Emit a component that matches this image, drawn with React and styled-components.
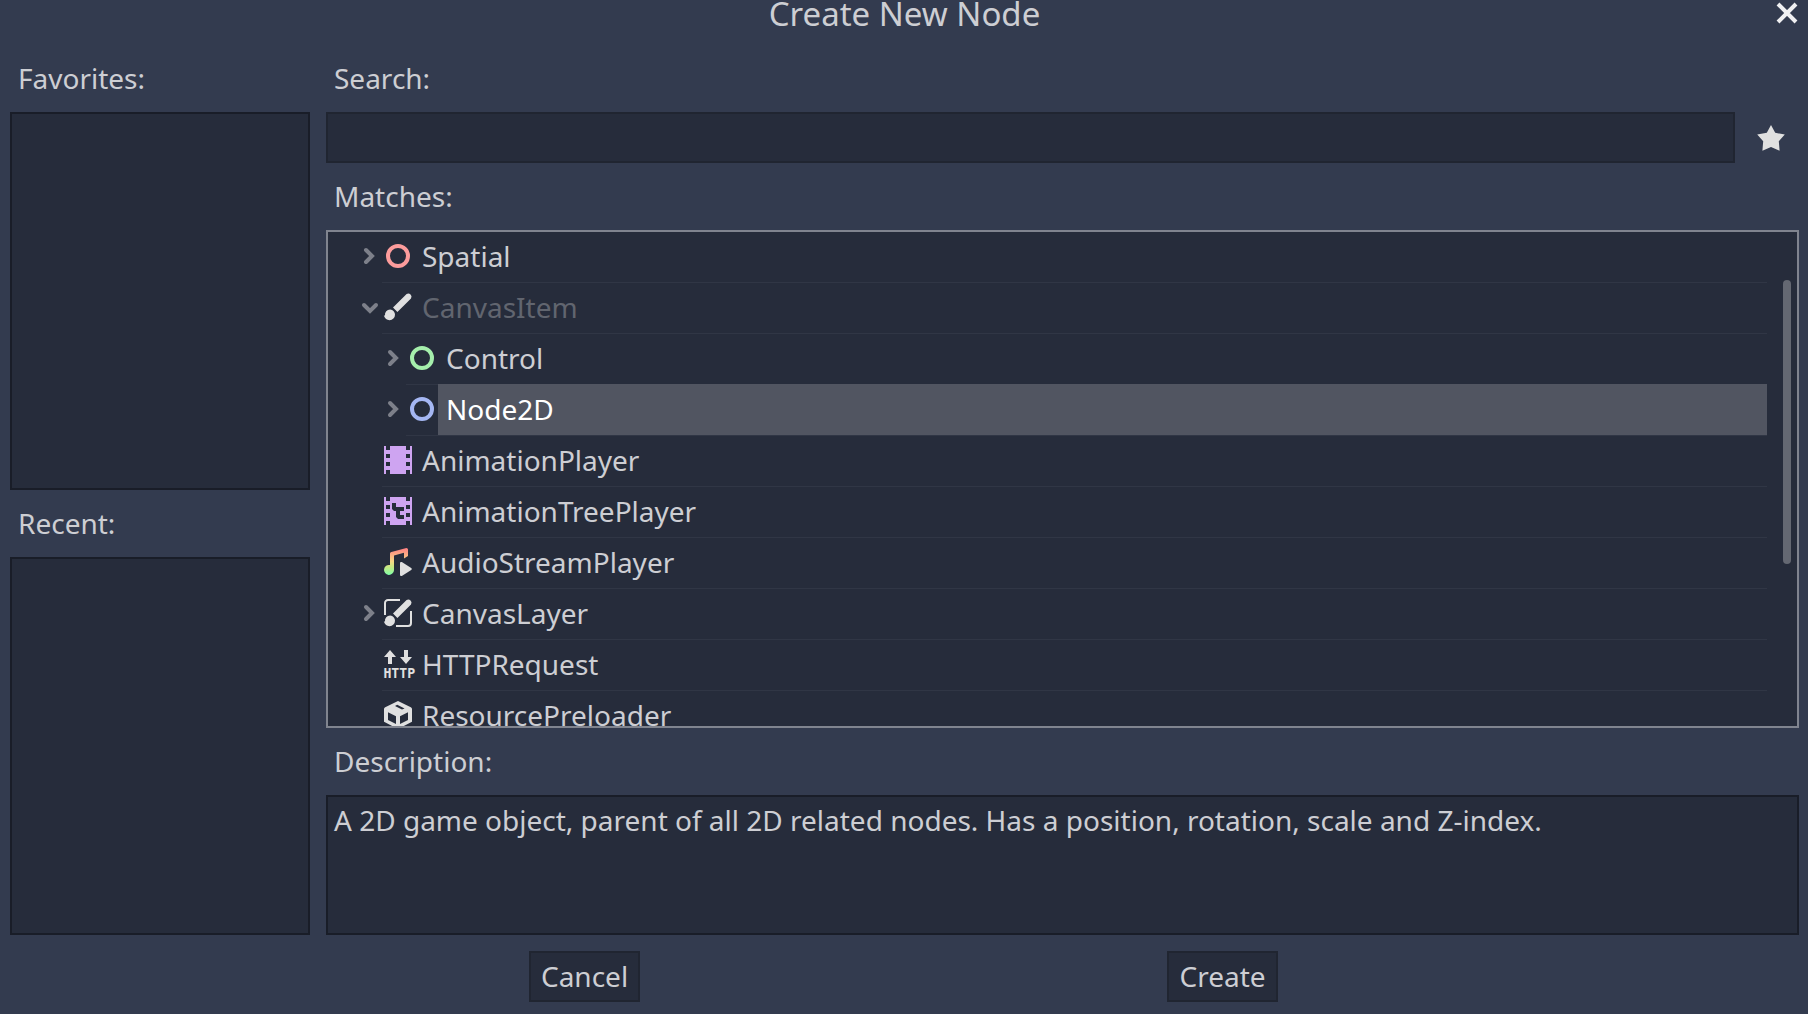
import React, { useState } from 'react';
import styled, { createGlobalStyle } from 'styled-components';

const color = {
  base: '#333b4f',
  panel: '#262c3b',
  panelEdge: '#191d28',
  controlEdge: '#202531',
  focusEdge: '#80848f',
  text: '#cdced3',
  disabled: '#61656f',
  selected: '#515561',
  line: '#303645',
  thumb: '#646872',
  arrow: '#7d808a',
  icon: '#e0e0e0',
};

const GlobalStyle = createGlobalStyle`
  *, *::before, *::after { box-sizing: border-box; }
  body {
    margin: 0;
    background: ${color.base};
    color: ${color.text};
    font: 28px/38px "Noto Sans", sans-serif;
  }
  button, input { font: inherit; color: inherit; }
`;

const Dialog = styled.div`
  display: flex;
  flex-direction: column;
  height: 100vh;
  padding: 0 9px 12px 10px;
`;

const TitleBar = styled.header`
  display: grid;
  grid-template-columns: 24px 1fr 24px;
  flex: none;
  height: 45px;
`;

const Title = styled.h1`
  grid-column: 2;
  margin: 0;
  font-size: 33px;
  font-weight: 400;
  line-height: 28px;
  text-align: center;
`;

const IconButton = styled.button`
  display: flex;
  align-items: center;
  justify-content: center;
  flex: none;
  width: ${(p) => p.$width}px;
  height: ${(p) => p.$height}px;
  padding: ${(p) => p.$top || 0}px 0 0;
  border: 0;
  background: none;
  cursor: pointer;
`;

const Body = styled.main`
  display: flex;
  flex: 1;
  gap: 16px;
  min-height: 0;
`;

const Sidebar = styled.aside`
  display: flex;
  flex-direction: column;
  flex: none;
  width: 300px;
`;

const Content = styled.div`
  display: flex;
  flex-direction: column;
  flex: 1;
  min-width: 0;
`;

const Caption = styled.label`
  flex: none;
  padding-left: 8px;
  line-height: 67px;
`;

const Panel = styled.div`
  flex: ${(p) => (p.$height ? 'none' : '1')};
  height: ${(p) => (p.$height ? `${p.$height}px` : 'auto')};
  padding: 4px 6px;
  border: 2px solid ${color.panelEdge};
  background: ${color.panel};
`;

const SearchRow = styled.div`
  display: flex;
  gap: 8px;
`;

const SearchInput = styled.input`
  flex: 1;
  min-width: 0;
  height: 51px;
  padding: 0 8px;
  border: 2px solid ${color.controlEdge};
  border-radius: 0;
  outline: none;
  background: ${color.panel};
`;

const TreeFrame = styled.div`
  display: flex;
  flex: 1;
  min-height: 0;
  overflow: hidden;
  border: 2px solid ${color.focusEdge};
  background: ${color.panel};
`;

const Tree = styled.ul`
  flex: 1;
  min-width: 0;
  margin: -1px 0 0;
  padding: 0;
  list-style: none;
`;

const Row = styled.li`
  display: flex;
  align-items: flex-start;
  height: 51px;
  padding-left: ${(p) => 30 + p.$depth * 24}px;
`;

const Toggle = styled.button`
  flex: none;
  width: 24px;
  height: 24px;
  margin: 13px 0;
  padding: 0;
  border: 0;
  background: none;
  visibility: ${(p) => (p.$shown ? 'visible' : 'hidden')};
  svg { display: block; }
`;

const Cell = styled.div`
  display: flex;
  flex: 1;
  min-width: 0;
  box-shadow: 0 1px 0 ${color.line};
`;

const IconSlot = styled.span`
  flex: none;
  width: 32px;
  height: 32px;
  margin-top: 9px;
  svg { display: block; overflow: visible; }
`;

const Name = styled.span`
  flex: 1;
  padding-left: 8px;
  line-height: 51px;
  white-space: nowrap;
  cursor: default;
  color: ${(p) => (p.$selected ? '#ffffff' : p.$disabled ? color.disabled : color.text)};
  background: ${(p) => (p.$selected ? color.selected : 'transparent')};
`;

const ScrollTrack = styled.div`
  flex: none;
  width: 8px;
  margin: 48px 6px 0 16px;
`;

const ScrollThumb = styled.div`
  height: 284px;
  border-radius: 4px;
  background: ${color.thumb};
`;

const Description = styled.p`
  margin: 0;
`;

const Footer = styled.footer`
  display: flex;
  flex: none;
  justify-content: space-evenly;
  padding: 16px 2px 0 0;
`;

const DialogButton = styled.button`
  min-width: 111px;
  height: 51px;
  margin: 0 8px;
  padding: 0 10px 2px;
  border: 2px solid ${color.controlEdge};
  background: ${color.panel};
  cursor: pointer;
`;

const Icon = ({ children }) => (
  <svg width="32" height="32" viewBox="0 0 16 16" fill={color.icon} aria-hidden="true">
    {children}
  </svg>
);

const Ring = ({ stroke }) => (
  <Icon>
    <circle cx="8" cy="8" r="5" fill="none" stroke={stroke} strokeWidth="2" />
  </Icon>
);

const BrushShape = () => (
  <>
    <path d="M5.5 8.3 12.3 1.5A1.6 1.6 0 0 1 14.5 3.7L7.7 10.5Z" />
    <path d="M4.1 9.2A2.6 2.6 0 0 1 6.5 11.9A2.7 2.7 0 0 1 3.8 14.6C2.3 14.6 1.5 13.9 0.9 12.3L1.5 12.2A2.6 2.6 0 0 1 4.1 9.2Z" />
  </>
);

const BrushIcon = () => (
  <Icon>
    <BrushShape />
  </Icon>
);

const LayerIcon = () => (
  <Icon>
    <path
      d="M1.5 9V3A1.5 1.5 0 0 1 3 1.5H9M14.5 7V13A1.5 1.5 0 0 1 13 14.5H7"
      fill="none"
      stroke={color.icon}
    />
    <BrushShape />
  </Icon>
);

const FilmIcon = ({ tree }) => (
  <Icon>
    <path
      fill="#cea4f1"
      fillRule="evenodd"
      d="M1 1H2V3H4V1H12V3H14V1H15V15H14V13H12V15H4V13H2V15H1ZM2 5V7H4V5ZM2 9V11H4V9ZM12 5V7H14V5ZM12 9V11H14V9Z"
    />
    {tree && <path fill={color.panel} d="M5 4H7V6H11V8H9V10H11V12H8L7 11V8H6L5 7Z" />}
  </Icon>
);

const AudioIcon = () => (
  <Icon>
    <defs>
      <linearGradient id="note" x1="0" y1="1" x2="0" y2="14.5" gradientUnits="userSpaceOnUse">
        <stop offset="0" stopColor="#ff7f83" />
        <stop offset="0.5" stopColor="#f7d984" />
        <stop offset="0.72" stopColor="#c4ea84" />
        <stop offset="1" stopColor="#7dffa8" />
      </linearGradient>
    </defs>
    <path
      fill="url(#note)"
      d="M12.2 1A.8.8 0 0 1 13 1.8V5L11 6.3V3.4L6 4.8V12A2.5 2.5 0 1 1 4 9.5V3.9A.9.9 0 0 1 4.7 3Z"
    />
    <path d="M9 8.6C9 8 9.6 7.8 10.1 8.1L14.6 11A.6.6 0 0 1 14.6 12L10.1 14.9C9.6 15.2 9 15 9 14.4Z" />
  </Icon>
);

const HttpIcon = () => (
  <Icon>
    <path d="M4 1 7 4.5H5V8H3V4.5H1ZM11 1H13V4.5H15L12 8 9 4.5H11Z" />
    <text x="0.7" y="15" fontFamily="DejaVu Sans Mono, monospace" fontWeight="700" fontSize="6.6">
      HTTP
    </text>
  </Icon>
);

const PackageIcon = () => (
  <Icon>
    <path
      fillRule="evenodd"
      d="M8 1 14.4 4.1Q15 4.4 15 5V11.4L8 15 1 11.4V5Q1 4.4 1.6 4.1ZM3 6.6V10.5L7 12.5V8.6ZM13 6.6 9 8.6V12.5L13 10.5ZM7.6 2.9 6.5 3.5 10 5.3 11.3 4.7Z"
    />
  </Icon>
);

const StarIcon = () => (
  <Icon>
    <path d="M8 1 10.1 4.9 14.9 5.8 11.9 9.1 12.3 13.9 8 12 3.7 13.9 4.1 9.1 1.1 5.8 5.9 4.9Z" />
  </Icon>
);

const CloseIcon = () => (
  <svg width="24" height="24" viewBox="0 0 24 24" aria-hidden="true">
    <path d="M3 3 21 21M21 3 3 21" fill="none" stroke="#f0f0f2" strokeWidth="4" />
  </svg>
);

const Chevron = ({ open }) => (
  <svg width="24" height="24" viewBox="0 0 24 24" aria-hidden="true">
    <path
      d={open ? 'M6 10 12 16 18 10' : 'M8 6 14 12 8 18'}
      fill="none"
      stroke={color.arrow}
      strokeWidth="4"
      strokeLinecap="round"
    />
  </svg>
);

const nodes = [
  { name: 'Spatial', depth: 0, arrow: 'closed', icon: <Ring stroke="#fc9c9c" /> },
  { name: 'CanvasItem', depth: 0, arrow: 'open', disabled: true, icon: <BrushIcon /> },
  { name: 'Control', depth: 1, arrow: 'closed', icon: <Ring stroke="#a5efac" /> },
  { name: 'Node2D', depth: 1, arrow: 'closed', icon: <Ring stroke="#a5b7f3" /> },
  { name: 'AnimationPlayer', depth: 0, icon: <FilmIcon /> },
  { name: 'AnimationTreePlayer', depth: 0, icon: <FilmIcon tree /> },
  { name: 'AudioStreamPlayer', depth: 0, icon: <AudioIcon /> },
  { name: 'CanvasLayer', depth: 0, arrow: 'closed', icon: <LayerIcon /> },
  { name: 'HTTPRequest', depth: 0, icon: <HttpIcon /> },
  { name: 'ResourcePreloader', depth: 0, icon: <PackageIcon /> },
];

export default function App() {
  const [selected, setSelected] = useState('Node2D');

  return (
    <>
      <GlobalStyle />
      <Dialog role="dialog" aria-labelledby="dialog-title">
        <TitleBar>
          <Title id="dialog-title">Create New Node</Title>
          <IconButton type="button" aria-label="Close" $width={24} $height={26}>
            <CloseIcon />
          </IconButton>
        </TitleBar>
        <Body>
          <Sidebar>
            <Caption as="div" id="favorites">Favorites:</Caption>
            <Panel role="listbox" aria-labelledby="favorites" />
            <Caption as="div" id="recent">Recent:</Caption>
            <Panel role="listbox" aria-labelledby="recent" />
          </Sidebar>
          <Content>
            <Caption htmlFor="search">Search:</Caption>
            <SearchRow>
              <SearchInput id="search" type="text" />
              <IconButton type="button" aria-label="Favorite" $width={56} $height={51} $top={3}>
                <StarIcon />
              </IconButton>
            </SearchRow>
            <Caption as="div" id="matches">Matches:</Caption>
            <TreeFrame>
              <Tree role="tree" aria-labelledby="matches">
                {nodes.map((node) => (
                  <Row
                    key={node.name}
                    role="treeitem"
                    aria-selected={selected === node.name}
                    $depth={node.depth}
                  >
                    <Toggle type="button" aria-label={`Toggle ${node.name}`} $shown={!!node.arrow}>
                      <Chevron open={node.arrow === 'open'} />
                    </Toggle>
                    <Cell>
                      <IconSlot>{node.icon}</IconSlot>
                      <Name
                        $selected={selected === node.name}
                        $disabled={node.disabled}
                        onClick={() => !node.disabled && setSelected(node.name)}
                      >
                        {node.name}
                      </Name>
                    </Cell>
                  </Row>
                ))}
              </Tree>
              <ScrollTrack>
                <ScrollThumb />
              </ScrollTrack>
            </TreeFrame>
            <Caption as="div" id="description">Description:</Caption>
            <Panel $height={140} aria-labelledby="description">
              <Description>
                A 2D game object, parent of all 2D related nodes. Has a position, rotation, scale and Z-index.
              </Description>
            </Panel>
          </Content>
        </Body>
        <Footer>
          <DialogButton type="button">Cancel</DialogButton>
          <DialogButton type="button">Create</DialogButton>
        </Footer>
      </Dialog>
    </>
  );
}
